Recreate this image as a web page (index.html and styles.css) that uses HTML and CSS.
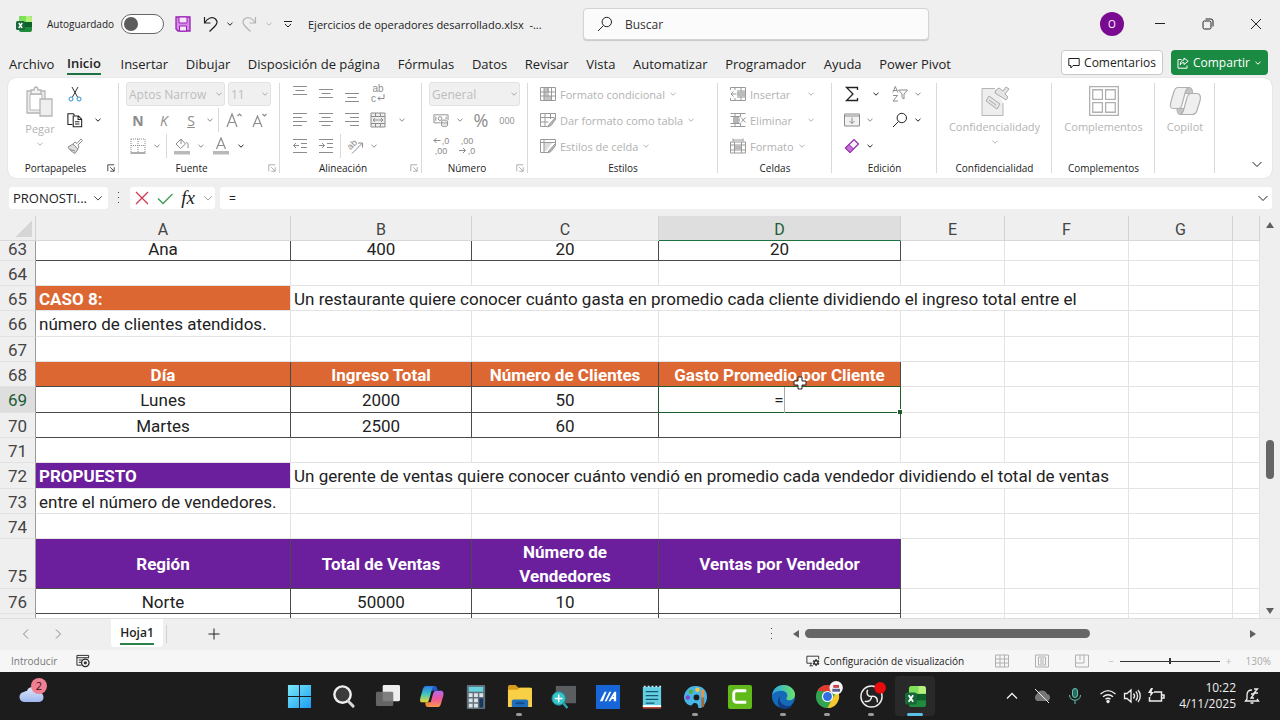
FILE: index.html
```html
<!DOCTYPE html>
<html lang="es">
<head>
<meta charset="utf-8">
<title>Ejercicios de operadores desarrollado.xlsx</title>
<link rel="stylesheet" href="styles.css">
</head>
<body>
<svg class="defs" aria-hidden="true">
  <defs>
    <linearGradient id="gWin" x1="0" y1="0" x2="1" y2="1"><stop offset="0" stop-color="#7be9fb"/><stop offset="1" stop-color="#1b9df0"/></linearGradient>
    <linearGradient id="gCopA" x1="0" y1="0" x2="0" y2="1"><stop offset="0" stop-color="#2a7be8"/><stop offset=".5" stop-color="#3fc6c0"/><stop offset="1" stop-color="#f3d62e"/></linearGradient>
    <linearGradient id="gCopB" x1="0" y1="0" x2="0" y2="1"><stop offset="0" stop-color="#b16bf0"/><stop offset=".5" stop-color="#f0569a"/><stop offset="1" stop-color="#fb9a4e"/></linearGradient>
    <linearGradient id="gEdge" x1="0" y1="0" x2="1" y2="0"><stop offset="0" stop-color="#2aa6e6"/><stop offset="1" stop-color="#6be36a"/></linearGradient>
    <linearGradient id="gCloud" x1="0" y1="0" x2="0" y2="1"><stop offset="0" stop-color="#dfe8fb"/><stop offset="1" stop-color="#9fb7ee"/></linearGradient>
  </defs>
  <symbol id="caret" viewBox="0 0 8 8"><path d="M1.500 2.800 4 5.200 6.500 2.800"/></symbol>
  <symbol id="chev" viewBox="0 0 12 12"><path d="M1.500 4 6 8.500 10.500 4"/></symbol>
  <symbol id="launch" viewBox="0 0 10 10"><path d="M1 9V1h8M9 4v5H4M4 4l4.500 4.500"/></symbol>
  <symbol id="excel" viewBox="0 0 16 16"><path fill="#1f8b3d" stroke="none" d="M3 2a2 2 0 0 1 2-2h9a2 2 0 0 1 2 2v12a2 2 0 0 1-2 2H5a2 2 0 0 1-2-2z"/><path fill="#7fe05a" stroke="none" d="M5 0h5v6H3V2a2 2 0 0 1 2-2z"/><path fill="#b6f07c" stroke="none" d="M10 0h4a2 2 0 0 1 2 2v4h-6z"/><path fill="#0f5f2a" stroke="none" d="M8 6h8v5H8z"/><rect x="0" y="5" width="9" height="9" rx="1.500" fill="#17693a" stroke="none"/><path stroke="#fff" stroke-width="1.400" d="m2.800 7 3.400 5M6.200 7l-3.400 5"/></symbol>
  <symbol id="save" viewBox="0 0 16 16"><path fill="#d58ee8" stroke="#9a1fb4" stroke-width="1.300" d="M1 1h14v14H3l-2-2z"/><path fill="#f7e6fa" stroke="#9a1fb4" d="M4 1h8v6H4zM4.500 10h7v5h-7z"/></symbol>
  <symbol id="undo" viewBox="0 0 16 16"><path stroke-width="1.200" d="M1.500 1v6h6M1.500 7c3-5 8-7 11-4 3.500 3.500 1 6-6 12.500"/></symbol>
  <symbol id="redo" viewBox="0 0 16 16"><path stroke-width="1.200" d="M14.500 1v6h-6M14.500 7c-3-5-8-7-11-4-3.500 3.500-1 6 6 12.500"/></symbol>
  <symbol id="qat" viewBox="0 0 10 10"><path d="M1 2.500h8M2 5l3 3 3-3"/></symbol>
  <symbol id="mag" viewBox="0 0 16 16"><circle cx="9.800" cy="6" r="4.700"/><path d="M6.500 9.500 1 15"/></symbol>
  <symbol id="comment" viewBox="0 0 12 12"><path d="M.8 1.500h10.400v7H5L2.800 11V8.500h-2z"/></symbol>
  <symbol id="share" viewBox="0 0 12 12"><path d="M4.500 2.500H1v8.700h9V8.500M7 1l4.200 3.200L7 7.500V5.600C5 5.600 4 6.500 3.200 8 3.300 5 4.500 3.200 7 3z"/></symbol>
  <symbol id="paste" viewBox="0 0 30 32"><path fill="#ececec" stroke="#b5b5b5" stroke-width="1.300" d="M2 5h18v22H2z"/><path fill="#fff" stroke="#b5b5b5" d="M5 8h12v16H5z"/><path fill="#f4f4f4" stroke="#b5b5b5" stroke-width="1.300" d="M6 4h3c0-4 4-4 4 0h3v4H6z"/><path fill="#efefef" stroke="#b5b5b5" stroke-width="1.300" d="M15 13h12v17H15z"/></symbol>
  <symbol id="cut" viewBox="0 0 16 16"><path stroke="#333" d="m5 1 5.500 10M11 1 5.500 11"/><circle cx="4" cy="13" r="2" stroke="#2a8fd0"/><circle cx="12" cy="13" r="2" stroke="#2a8fd0"/></symbol>
  <symbol id="copy" viewBox="0 0 18 16"><path stroke-width="1.200" d="M6 13H1V1h6l1.500 1.500M7 3.500h6l3.500 3.500v8.500H7zM12.500 3.500V7.500h4M9 10h5M9 12.500h5"/></symbol>
  <symbol id="brush" viewBox="0 0 16 16"><path fill="#ddd" d="m1 9 5-3 5 5-3 4.500C5 14 2.500 12 1 9z"/><path d="M3 11.500 8 13M6 6l2-2 2 1.500L14 1l1.500 1.500L11 7l1 2-1.500 2"/></symbol>
  <symbol id="border" viewBox="0 0 16 16"><path stroke-dasharray="1 1" d="M1 1h14v13M1 1v13M8 1v13M1 7.500h14"/><path stroke-width="1.400" d="M.5 15h15"/></symbol>
  <symbol id="fill" viewBox="0 0 18 18"><path d="m3 7 5-5 4.500 5L7.500 11.500zM8 2v5M13 6c1.500-1 2.500 0 2 5"/><path fill="#b9b9b9" stroke="none" d="M1 14h16v3.500H1z"/></symbol>
  <symbol id="fcolor" viewBox="0 0 18 18"><path stroke-width="1.200" d="m4.500 12 4.500-11 4.500 11M6 8.500h6"/><path fill="#b9b9b9" stroke="none" d="M1 14h16v3.500H1z"/></symbol>
  <symbol id="bigA" viewBox="0 0 16 16"><path stroke-width="1.200" d="M1 15 6 2l5 13M3 10.500h6M11.500 4 13.500 2l2 2"/></symbol>
  <symbol id="smallA" viewBox="0 0 16 16"><path stroke-width="1.200" d="M1 15 5.500 4 10 15M2.500 11.500h6M10.500 2l2 2 2-2"/></symbol>
  <symbol id="at" viewBox="0 0 16 16"><path d="M1 .5h14M3.500 4.500h9M1 8.500h14"/></symbol>
  <symbol id="am" viewBox="0 0 16 16"><path d="M1 3.500h14M3.500 7.500h9M1 11.500h14"/></symbol>
  <symbol id="ab" viewBox="0 0 16 16"><path d="M1 7.500h14M3.500 11.500h9M1 15.500h14"/></symbol>
  <symbol id="al" viewBox="0 0 16 16"><path d="M1 1.500h14M1 5.500h9M1 9.500h14M1 13.500h9"/></symbol>
  <symbol id="ac" viewBox="0 0 16 16"><path d="M1 1.500h14M3.500 5.500h9M1 9.500h14M3.500 13.500h9"/></symbol>
  <symbol id="ar" viewBox="0 0 16 16"><path d="M1 1.500h14M6 5.500h9M1 9.500h14M6 13.500h9"/></symbol>
  <symbol id="outd" viewBox="0 0 16 16"><path d="M1 1.500h14M9 5.500h6M9 9.500h6M1 14.500h14M1.500 7.500H7M4 5 1.500 7.500 4 10"/></symbol>
  <symbol id="ind" viewBox="0 0 16 16"><path d="M1 1.500h14M9 5.500h6M9 9.500h6M1 14.500h14M1 7.500h5.500M4 5l2.500 2.500L4 10"/></symbol>
  <symbol id="merge" viewBox="0 0 16 16"><path fill="#eee" d="M1 1h14v14H1z"/><path d="M1 4.500h14M1 11.500h14M5.500 1v3.500M10.500 1v3.500M5.500 11.500V15M10.500 11.500V15M3 8h10M5 6 3 8l2 2M11 6l2 2-2 2"/></symbol>
  <symbol id="money" viewBox="0 0 17 16"><path d="M8 11H1V2.500h15V8M3 4.500v4.500M14 4.500V7"/><circle cx="7.500" cy="6.500" r="2"/><path fill="#e8e8e8" d="M9 9.500c0-2 6.500-2 6.500 0v4c0 2-6.500 2-6.500 0zM9 10c0 1.500 6.500 1.500 6.500 0"/></symbol>
  <symbol id="cond" viewBox="0 0 16 16"><path fill="#fff" d="M.5 1.500h15v13H.5z"/><path fill="#c4c4c4" stroke="none" d="M4 2h5v4H4zM4 10h7v4H4zM4 6h3v4H4z"/><path d="M.5 6h15M.5 10h15M4 1.500v13M11.500 1.500v13M8 1.500V10"/></symbol>
  <symbol id="tabl" viewBox="0 0 16 16"><path d="M7 14.500H.5v-13h15V6M.5 5.500h14M.5 10h8M5 1.500v13M10.500 1.500V7"/><path fill="#bbb" d="M15.500 5.500 9.500 12l-2 3 3.500-1.500 4.500-6z"/></symbol>
  <symbol id="styl" viewBox="0 0 16 16"><path fill="#ddd" stroke="none" d="M4 5h8l-6 8H4z"/><path d="M7 14.500H.5v-13h15V6M.5 4.500h15M4 1.500v13"/><path fill="#bbb" d="M15.500 5.500 9.500 12l-2 3 3.500-1.500 4.500-6z"/></symbol>
  <symbol id="cins" viewBox="0 0 16 16"><path d="M.5 4V1.500h15v13H.5V12M7 5h8.500M7 11h8.500M11 1.500v13M5 1.500V4M5 12v2.500M6.500 8H1M3.500 5.500 1 8l2.500 2.500"/><path fill="#bbb" stroke="none" d="M7 5.500h8v5H7z"/></symbol>
  <symbol id="cdel" viewBox="0 0 16 16"><path d="M.5 1.500h15M.5 14.500h15M.5 4.500h10M.5 11.500h10M5 1.500v3M5 11.500v3M10.500 1.500v3M10.500 11.500v3M11 5.500l4.500 5M15.500 5.500l-4.500 5"/><path fill="#b5b5b5" stroke="none" d="M3 5h6l1 3-1 3H3z"/></symbol>
  <symbol id="cfmt" viewBox="0 0 16 16"><path d="M.5 4h15v11H.5zM3 .5v3M13 .5v3M3 2h10M.5 7h15M.5 12h15M4.500 4v11M11.500 4v11"/><path fill="#bbb" stroke="none" d="M5 7.500h6v4H5z"/></symbol>
  <symbol id="sum" viewBox="0 0 14 16"><path stroke-width="1.300" d="M12.500 4V1.500H1.500L8 8l-6.500 6.500h11V12"/></symbol>
  <symbol id="filld" viewBox="0 0 16 16"><path fill="#f2f2f2" d="M.5 2h15v12H.5zM.5 4h15"/><path d="M8 5.500v6M5.500 9 8 11.500 10.500 9"/></symbol>
  <symbol id="erase" viewBox="0 0 16 16"><path fill="#fbeffd" stroke="#8a2aa0" stroke-width="1.200" d="m1.500 10 8.500-8.500 4.500 4.500L6 14.500z"/><path fill="#c76fdc" stroke="#8a2aa0" d="M1.500 10 5 6.500 9.500 11 6 14.500z"/></symbol>
  <symbol id="sort" viewBox="0 0 16 16"><path d="m.8 6.500 2.500-6 2.500 6M1.500 4.500h3.600M1 9.500h4.500L1 15h5M6.500 4h9L12 8v5l-2-1.500V8z"/></symbol>
  <symbol id="conf" viewBox="0 0 28 30"><path fill="#eee" stroke="#b5b5b5" d="M14 2.500H1v27h21V17"/><path fill="#e4e4e4" stroke="#aaa" d="m8 10 11 8-3 5-11-8zM15 4l3-2 4 3 3-4 3 2-4 5 3 3-2 3-11-7z"/><path stroke="#aaa" d="m8 14 7 5"/></symbol>
  <symbol id="addin" viewBox="0 0 28 28"><path stroke="#b0b0b0" stroke-width="1.200" d="M.6.6h26.800v26.800H.6zM3.500 3.500h9v9h-9zM15.500 3.500h9v9h-9zM3.500 15.500h9v9h-9zM15.500 15.500h9v9h-9z"/></symbol>
  <symbol id="copg" viewBox="0 0 32 29"><path fill="#c4c4c4" stroke="#b0b0b0" d="M16 1h4c3 0 3 2 4 6h-9zM8 22h9l-2 6h-4c-2 0-3-2-3-6z"/><path fill="#efefef" stroke="#b0b0b0" stroke-width="1.200" d="M9 1h11c-2 0-3 2-4 6l-3 11c-1 3-1 4-4 4H4c-3 0-3-3-2-7L5 5c1-3 2-4 4-4zM23 28H11c2 0 3-2 4-6l3-11c1-3 2-4 4-4h6c3 0 4 3 3 7l-3 10c-1 3-2 4-5 4z"/></symbol>
  <symbol id="cfg" viewBox="0 0 16 14"><path d="M7 9.500H1v-8h13.500V5M4 12.500h4M5.500 9.500v3"/><path fill="#333" stroke="none" d="M10.500 5h2l.3 1.500 1.500-.6 1 1.700-1.200 1 1.200 1.200-1 1.700-1.500-.5-.3 1.500h-2l-.4-1.500-1.500.5-1-1.700L8.900 8.600l-1.200-1 1-1.700 1.500.6z"/><circle cx="11.500" cy="8.800" r="1.300" fill="#fff" stroke="none"/></symbol>
  <symbol id="macro" viewBox="0 0 15 14"><path d="M6 11.500H1V1h12.500v3M1 3.500h12.500M3 6h4M3 8.500h2.500"/><circle cx="10" cy="9" r="4" stroke-width="1.300"/><circle cx="10" cy="9" r="1.700" fill="#333" stroke="none"/></symbol>
  <symbol id="vgrid" viewBox="0 0 14 13"><path d="M.5.5h13v12H.5zM.5 4.500h13M.5 8.500h13M5 .5v12M9.500.5v12"/></symbol>
  <symbol id="vpage" viewBox="0 0 14 13"><path d="M.5.5h13v12H.5zM3.500 2.500h7v8h-7zM5 4.500h4M5 6.500h4M5 8.500h4"/></symbol>
  <symbol id="vbrk" viewBox="0 0 14 13"><path d="M.5.5h13v12H.5zM.5 8.500h8.500V.5M5 .5v5"/></symbol>
</svg>

<div class="app">
<header class="title">
  <svg class="i s16"><use href="#excel"/></svg>
  <label class="auto">Autoguardado <input type="checkbox" class="toggle"></label>
  <div class="quick">
    <button class="b w26" aria-label="Guardar"><svg class="i s16"><use href="#save"/></svg></button>
    <button class="b w30" aria-label="Deshacer"><svg class="i s16"><use href="#undo"/></svg></button>
    <button class="b w8" aria-label="Más deshacer"><svg class="i s8"><use href="#caret"/></svg></button>
    <button class="b w30 dim" aria-label="Rehacer"><svg class="i s16"><use href="#redo"/></svg></button>
    <button class="b w10 dim" aria-label="Más rehacer"><svg class="i s8"><use href="#caret"/></svg></button>
    <button class="b w28" aria-label="Personalizar"><svg class="i s10"><use href="#qat"/></svg></button>
  </div>
  <span class="doc">Ejercicios de operadores desarrollado.xlsx&nbsp; -...</span>
  <label class="search"><svg class="i s16"><use href="#mag"/></svg><input type="search" placeholder="Buscar" aria-label="Buscar"></label>
  <div class="win">
    <button class="avatar">O</button>
    <button class="b w48" aria-label="Minimizar"><svg class="i s12" viewBox="0 0 12 12"><path d="M1 5.500h10"/></svg></button>
    <button class="b w48" aria-label="Restaurar"><svg class="i s12" viewBox="0 0 12 12"><rect x="1" y="3" width="8" height="8" rx="1.500"/><path d="M3.500 1H9a2 2 0 0 1 2 2v5.500"/></svg></button>
    <button class="b w48" aria-label="Cerrar"><svg class="i s12" viewBox="0 0 12 12"><path d="m1 1 10 10M11 1 1 11"/></svg></button>
  </div>
</header>

<div class="tabs">
  <nav>
    <button>Archivo</button><button class="on">Inicio</button><button>Insertar</button><button>Dibujar</button><button>Disposición de página</button><button>Fórmulas</button><button>Datos</button><button>Revisar</button><button>Vista</button><button>Automatizar</button><button>Programador</button><button>Ayuda</button><button>Power Pivot</button>
  </nav>
  <div class="acts">
    <button class="cmt"><svg class="i s12"><use href="#comment"/></svg>Comentarios</button>
    <button class="shr"><svg class="i s12"><use href="#share"/></svg>Compartir<svg class="i s8"><use href="#caret"/></svg></button>
  </div>
</div>

<section class="ribbon">
  <div class="grp">
    <div class="clip">
      <button class="big dim"><svg class="i paste"><use href="#paste"/></svg><span>Pegar</span><svg class="i s8"><use href="#caret"/></svg></button>
      <div>
        <div class="row"><button class="b w22" aria-label="Cortar"><svg class="i s16"><use href="#cut"/></svg></button></div>
        <div class="row"><button class="b w22" aria-label="Copiar"><svg class="i s16"><use href="#copy"/></svg></button><button class="b w24" aria-label="Más copiar"><svg class="i s8"><use href="#caret"/></svg></button></div>
        <div class="row"><button class="b w22 mid" aria-label="Copiar formato"><svg class="i s16"><use href="#brush"/></svg></button></div>
      </div>
    </div>
    <footer class="more">Portapapeles<button class="b ln" aria-label="Opciones de portapapeles"><svg class="i s8"><use href="#launch"/></svg></button></footer>
  </div>
  <div class="grp mid">
    <div class="row g3"><label class="sel w99"><select disabled aria-label="Fuente"><option>Aptos Narrow</option></select><svg class="i s8"><use href="#caret"/></svg></label><label class="sel w43"><select disabled aria-label="Tamaño"><option>11</option></select><svg class="i s8"><use href="#caret"/></svg></label></div>
    <div class="row"><button class="b w24 t"><b>N</b></button><button class="b w28 t"><i>K</i></button><button class="b w26 t"><u>S</u></button><button class="b w12" aria-label="Más subrayado"><svg class="i s8"><use href="#caret"/></svg></button><span class="vr"></span><button class="b w26" aria-label="Aumentar"><svg class="i s16"><use href="#bigA"/></svg></button><button class="b w26" aria-label="Disminuir"><svg class="i s16"><use href="#smallA"/></svg></button></div>
    <div class="row"><button class="b w24" aria-label="Bordes"><svg class="i s16"><use href="#border"/></svg></button><button class="b w14" aria-label="Más bordes"><svg class="i s8"><use href="#caret"/></svg></button><span class="vr"></span><button class="b w26" aria-label="Relleno"><svg class="i s18"><use href="#fill"/></svg></button><button class="b w12" aria-label="Más relleno"><svg class="i s8"><use href="#caret"/></svg></button><button class="b w28" aria-label="Color de fuente"><svg class="i s18"><use href="#fcolor"/></svg></button><button class="b w12 dark" aria-label="Más color"><svg class="i s8"><use href="#caret"/></svg></button></div>
    <footer class="more">Fuente<button class="b ln" aria-label="Opciones de fuente"><svg class="i s8"><use href="#launch"/></svg></button></footer>
  </div>
  <div class="grp mid">
    <div class="row"><button class="b w26" aria-label="Arriba"><svg class="i s16"><use href="#at"/></svg></button><button class="b w26" aria-label="Medio"><svg class="i s16"><use href="#am"/></svg></button><button class="b w26" aria-label="Abajo"><svg class="i s16"><use href="#ab"/></svg></button><button class="b w26 duo wrap" aria-label="Ajustar texto"><span>ab</span><span>c<svg class="i s8" viewBox="0 0 8 8"><path d="M7 0v4.500H1M3 2.500l-2 2 2 2"/></svg></span></button></div>
    <div class="row"><button class="b w26" aria-label="Izquierda"><svg class="i s16"><use href="#al"/></svg></button><button class="b w26" aria-label="Centro"><svg class="i s16"><use href="#ac"/></svg></button><button class="b w26" aria-label="Derecha"><svg class="i s16"><use href="#ar"/></svg></button><button class="b w26" aria-label="Combinar"><svg class="i s16"><use href="#merge"/></svg></button><button class="b w22" aria-label="Más combinar"><svg class="i s8"><use href="#caret"/></svg></button></div>
    <div class="row"><button class="b w26" aria-label="Menos sangría"><svg class="i s16"><use href="#outd"/></svg></button><button class="b w26" aria-label="Más sangría"><svg class="i s16"><use href="#ind"/></svg></button><span class="vr tight"></span><button class="b w26" aria-label="Orientación"><svg class="i s16" viewBox="0 0 16 16"><path d="M5 15.500 15.500 5M11 5h4.500v4.500"/><text class="rot" x="1" y="10" transform="rotate(-45 5 8)">ab</text></svg></button><button class="b w12" aria-label="Más orientación"><svg class="i s8"><use href="#caret"/></svg></button></div>
    <footer class="more">Alineación<button class="b ln" aria-label="Opciones de alineación"><svg class="i s8"><use href="#launch"/></svg></button></footer>
  </div>
  <div class="grp mid">
    <div class="row"><label class="sel w91"><select disabled aria-label="Formato de número"><option>General</option></select><svg class="i s8"><use href="#caret"/></svg></label></div>
    <div class="row"><button class="b w24" aria-label="Moneda"><svg class="i s16"><use href="#money"/></svg></button><button class="b w14" aria-label="Más moneda"><svg class="i s8"><use href="#caret"/></svg></button><button class="b w28 pct">%</button><button class="b w24 tiny">000</button></div>
    <div class="row"><button class="b w24 duo" aria-label="Aumentar decimales"><span><svg class="i s8" viewBox="0 0 8 8"><path d="M7.500 4.500H1M3.500 2 1 4.500 3.500 7"/></svg>,0</span><span>,00</span></button><button class="b w28 duo" aria-label="Disminuir decimales"><span>,00</span><span><svg class="i s8" viewBox="0 0 8 8"><path d="M0 4.500h6.500M4 2l2.500 2.500L4 7"/></svg>,0</span></button></div>
    <footer class="more">Número<button class="b ln" aria-label="Opciones de número"><svg class="i s8"><use href="#launch"/></svg></button></footer>
  </div>
  <div class="grp dimt wide">
    <div class="row"><button class="b lab"><svg class="i s16"><use href="#cond"/></svg>Formato condicional<svg class="i s8"><use href="#caret"/></svg></button></div>
    <div class="row"><button class="b lab"><svg class="i s16"><use href="#tabl"/></svg>Dar formato como tabla<svg class="i s8"><use href="#caret"/></svg></button></div>
    <div class="row"><button class="b lab"><svg class="i s16"><use href="#styl"/></svg>Estilos de celda<svg class="i s8"><use href="#caret"/></svg></button></div>
    <footer>Estilos</footer>
  </div>
  <div class="grp dimt wide">
    <div class="row"><button class="b lab stretch"><svg class="i s16"><use href="#cins"/></svg>Insertar<svg class="i s8"><use href="#caret"/></svg></button></div>
    <div class="row"><button class="b lab stretch"><svg class="i s16"><use href="#cdel"/></svg>Eliminar<svg class="i s8"><use href="#caret"/></svg></button></div>
    <div class="row"><button class="b lab"><svg class="i s16"><use href="#cfmt"/></svg>Formato<svg class="i s8"><use href="#caret"/></svg></button></div>
    <footer>Celdas</footer>
  </div>
  <div class="grp">
    <div class="row"><button class="b w26" aria-label="Autosuma"><svg class="i s16"><use href="#sum"/></svg></button><button class="b w22" aria-label="Más autosuma"><svg class="i s8"><use href="#caret"/></svg></button><button class="b w26 mid" aria-label="Ordenar"><svg class="i s16"><use href="#sort"/></svg></button><button class="b w10 mid" aria-label="Más ordenar"><svg class="i s8"><use href="#caret"/></svg></button></div>
    <div class="row"><button class="b w26 mid" aria-label="Rellenar"><svg class="i s16"><use href="#filld"/></svg></button><button class="b w10 mid" aria-label="Más rellenar"><svg class="i s8"><use href="#caret"/></svg></button><button class="b w26 gapl" aria-label="Buscar y seleccionar"><svg class="i s16"><use href="#mag"/></svg></button><button class="b w10" aria-label="Más buscar"><svg class="i s8"><use href="#caret"/></svg></button></div>
    <div class="row"><button class="b w26" aria-label="Borrar"><svg class="i s16"><use href="#erase"/></svg></button><button class="b w10" aria-label="Más borrar"><svg class="i s8"><use href="#caret"/></svg></button></div>
    <footer>Edición</footer>
  </div>
  <div class="grp"><button class="big dim"><svg class="i s30"><use href="#conf"/></svg><span>Confidencialidady</span><svg class="i s8"><use href="#caret"/></svg></button><footer>Confidencialidad</footer></div>
  <div class="grp"><button class="big dim"><svg class="i s30"><use href="#addin"/></svg><span>Complementos</span></button><footer>Complementos</footer></div>
  <div class="grp"><button class="big dim"><svg class="i s32"><use href="#copg"/></svg><span>Copilot</span></button></div>
  <button class="b fold" aria-label="Contraer cinta"><svg class="i s12"><use href="#chev"/></svg></button>
</section>

<section class="fbar">
  <button class="name">PRONOSTI...<svg class="i s10"><use href="#chev"/></svg></button>
  <span class="dots"></span>
  <div class="fx">
    <button class="b" aria-label="Cancelar"><svg class="i s14" viewBox="0 0 14 14"><path stroke="#cf3a52" stroke-width="1.300" d="m1 1 12 12M13 1 1 13"/></svg></button>
    <button class="b" aria-label="Aceptar"><svg class="i s16" viewBox="0 0 16 16"><path stroke="#3f9a54" stroke-width="1.300" d="m1 8.500 5 5L15.500 4"/></svg></button>
    <button class="b f">fx</button>
    <svg class="i s10 lt"><use href="#chev"/></svg>
  </div>
  <label class="formula"><input type="text" value="=" aria-label="Barra de fórmulas"><svg class="i s12"><use href="#chev"/></svg></label>
</section>

<main class="work">
  <div class="sheet">
    <table>
      <colgroup><col class="cr"><col class="ca"><col class="cb"><col class="cc"><col class="cd"><col class="ce"><col class="cf"><col class="cg"><col></colgroup>
      <thead><tr><th class="corner"></th><th>A</th><th>B</th><th>C</th><th class="act">D</th><th>E</th><th>F</th><th>G</th><th></th></tr></thead>
      <tbody>
        <tr class="cut"><th>63</th><td class="k">Ana</td><td class="k">400</td><td class="k">20</td><td class="k">20</td><td></td><td></td><td></td><td></td></tr>
        <tr><th>64</th><td></td><td></td><td></td><td></td><td></td><td></td><td></td><td></td></tr>
        <tr><th>65</th><td class="o l">CASO 8:</td><td class="l" colspan="5">Un restaurante quiere conocer cuánto gasta en promedio cada cliente dividiendo el ingreso total entre el</td><td></td><td></td></tr>
        <tr><th>66</th><td class="l">número de clientes atendidos.</td><td></td><td></td><td></td><td></td><td></td><td></td><td></td></tr>
        <tr><th>67</th><td></td><td></td><td></td><td></td><td></td><td></td><td></td><td></td></tr>
        <tr><th>68</th><td class="o k">Día</td><td class="o k">Ingreso Total</td><td class="o k">Número de Clientes</td><td class="o k host">Gasto Promedio por Cliente<svg class="cursor" viewBox="0 0 14 14"><path fill="#fff" stroke="#222" d="M5 1h4v4h4v4H9v4H5V9H1V5h4z"/></svg></td><td></td><td></td><td></td><td></td></tr>
        <tr><th class="act">69</th><td class="k">Lunes</td><td class="k">2000</td><td class="k">50</td><td class="k edit"><span>=</span></td><td></td><td></td><td></td><td></td></tr>
        <tr><th>70</th><td class="k">Martes</td><td class="k">2500</td><td class="k">60</td><td class="k"></td><td></td><td></td><td></td><td></td></tr>
        <tr><th>71</th><td></td><td></td><td></td><td></td><td></td><td></td><td></td><td></td></tr>
        <tr><th>72</th><td class="p l">PROPUESTO</td><td class="l" colspan="5">Un gerente de ventas quiere conocer cuánto vendió en promedio cada vendedor dividiendo el total de ventas</td><td></td><td></td></tr>
        <tr><th>73</th><td class="l">entre el número de vendedores.</td><td></td><td></td><td></td><td></td><td></td><td></td><td></td></tr>
        <tr><th>74</th><td></td><td></td><td></td><td></td><td></td><td></td><td></td><td></td></tr>
        <tr class="tall"><th>75</th><td class="p k">Región</td><td class="p k">Total de Ventas</td><td class="p k">Número de<br>Vendedores</td><td class="p k">Ventas por Vendedor</td><td></td><td></td><td></td><td></td></tr>
        <tr><th>76</th><td class="k">Norte</td><td class="k">50000</td><td class="k">10</td><td class="k"></td><td></td><td></td><td></td><td></td></tr>
        <tr><th></th><td class="k"></td><td class="k"></td><td class="k"></td><td class="k"></td><td></td><td></td><td></td><td></td></tr>
      </tbody>
    </table>
  </div>
  <div class="vscroll"><svg class="tri" viewBox="0 0 10 8"><path d="M5 1 9 7H1z"/></svg><span class="before"></span><span class="vthumb"></span><span class="after"></span><svg class="tri" viewBox="0 0 10 8"><path d="M5 7 9 1H1z"/></svg></div>
</main>

<div class="sheets">
  <button class="b nav" aria-label="Anterior"><svg class="i s12 lt" viewBox="0 0 12 12"><path d="M8 1.500 3.500 6 8 10.500"/></svg></button>
  <button class="b nav" aria-label="Siguiente"><svg class="i s12 lt" viewBox="0 0 12 12"><path d="M4 1.500 8.500 6 4 10.500"/></svg></button>
  <button class="stab"><span>Hoja1</span></button>
  <span class="rule"></span>
  <button class="b plus" aria-label="Hoja nueva"><svg class="i s12" viewBox="0 0 12 12"><path d="M6 .5v11M.5 6h11"/></svg></button>
  <span class="dots"></span>
  <div class="hscroll"><svg class="tri" viewBox="0 0 8 10"><path d="M1 5 7 1v8z"/></svg><span class="hthumb"></span><span class="hrest"></span><svg class="tri" viewBox="0 0 8 10"><path d="M7 5 1 1v8z"/></svg></div>
</div>

<div class="status">
  <span class="mode">Introducir</span>
  <svg class="i s14"><use href="#macro"/></svg>
  <button class="b cfg"><svg class="i s14"><use href="#cfg"/></svg>Configuración de visualización</button>
  <div class="views"><svg class="i s14"><use href="#vgrid"/></svg><svg class="i s14"><use href="#vpage"/></svg><svg class="i s14"><use href="#vbrk"/></svg></div>
  <label class="zoom"><span>−</span><input type="range" min="10" max="250" value="130" aria-label="Zoom"><span>+</span></label>
  <span class="pc">130%</span>
</div>

<footer class="task">
  <button class="b weather" aria-label="Tiempo"><svg viewBox="0 0 28 26"><path fill="url(#gCloud)" d="M6 24a5 5 0 0 1-1-10c1-1 2-1 3-1 1-5 10-6 12 1 6 1 6 10 0 10z"/><circle cx="20" cy="8" r="8" fill="#ef7f91"/><text class="badge" x="20" y="12">2</text></svg></button>
  <div class="apps">
    <button class="app1" aria-label="Inicio"><svg viewBox="0 0 26 26"><path fill="url(#gWin)" d="M1 1h11.500v11.500H1zM13.500 1H25v11.500H13.500zM1 13.500h11.500V25H1zM13.500 13.500H25V25H13.500z"/></svg></button>
    <button class="app1" aria-label="Buscar"><svg viewBox="0 0 26 26"><circle cx="12" cy="11" r="8.500" fill="#3b3b3b" stroke="#f0f0f0" stroke-width="2.500"/><path stroke="#d8d8d8" stroke-width="3" stroke-linecap="round" d="m18 18 5 5"/></svg></button>
    <button class="app1" aria-label="Vista de tareas"><svg viewBox="0 0 26 26"><rect x="8" y="1" width="18" height="17" rx="1.500" fill="#eee"/><rect x="1" y="8" width="18" height="15" rx="1.500" fill="#6f6f6f" opacity=".88"/></svg></button>
    <button class="app1" aria-label="Copilot"><svg viewBox="0 0 32 29"><path fill="#2458c8" d="M16 1h4c3 0 3 2 4 6h-9z"/><path fill="#f58a3c" d="M8 22h9l-2 6h-4c-2 0-3-2-3-6z"/><path fill="url(#gCopA)" d="M9 1h11c-2 0-3 2-4 6l-3 11c-1 3-1 4-4 4H4c-3 0-3-3-2-7L5 5c1-3 2-4 4-4z"/><path fill="url(#gCopB)" d="M23 28H11c2 0 3-2 4-6l3-11c1-3 2-4 4-4h6c3 0 4 3 3 7l-3 10c-1 3-2 4-5 4z"/></svg></button>
    <button class="app1" aria-label="Calculadora"><svg viewBox="0 0 26 26"><rect x="4" y="1" width="19" height="25" rx="1" fill="#60717c"/><path fill="#66d3dc" d="M6 3h15v5H6z"/><path fill="#dce4e8" d="M6 9.500h4v4H6zM11.500 9.500h4v4h-4zM17 9.500h4v4h-4zM6 15h4v4H6zM11.500 15h4v4h-4zM6 20.500h4v4H6zM11.500 20.500h4v4h-4z"/><path fill="#173a5c" d="M17 15h4v9.500h-4z"/></svg></button>
    <button class="app1 run" aria-label="Explorador"><svg viewBox="0 0 26 26"><path fill="#d79b1d" d="M1 3a2 2 0 0 1 2-2h6l3 3h12v8H1z"/><path fill="#f8cf45" d="M1 6h10l2-2h12a1 1 0 0 1 1 1v19H1z"/><path fill="#1d6fbc" d="M5 24v-6a2 2 0 0 1 2-2h13a2 2 0 0 1 2 2v6z"/><path fill="#124b87" d="M9 19h9v2H9z"/></svg></button>
    <button class="app1" aria-label="Lupa"><svg viewBox="0 0 26 26"><path fill="#5b5e61" d="M5 2h21v18H5z"/><circle cx="8" cy="15" r="7" fill="#38c3c9" stroke="#1b8c94"/><path stroke="#fff" stroke-width="1.500" d="M8 11v8M4 15h8"/><path stroke="#2ba9b0" stroke-width="2.500" d="m13 20 4 5"/></svg></button>
    <button class="app1" aria-label="MyASUS"><svg viewBox="0 0 26 26"><path fill="#1666d8" d="M1 1h25v25H1z"/><path fill="#fff" d="m5 18 5-10h2L8 18zM10 18l5-10h2l-5 10zM14 18l6-10h2v10h-2.500v-2.500h-2L16 18zM18.500 13.500h1V12z"/></svg></button>
    <button class="app1" aria-label="Bloc de notas"><svg viewBox="0 0 26 26"><path fill="#62cfe3" d="M4 3h19v21H4z"/><path fill="#fff" d="M4 22h19v2H4z"/><path fill="#c84b3c" d="M4 24h19v1.500H4z"/><path stroke="#19576d" stroke-width="1.300" d="M7 8h13M7 12h13M7 16h13M7 20h9"/><path stroke="#cdeff6" stroke-width="1.500" stroke-dasharray="2 2" d="M5 2.500h18"/></svg></button>
    <button class="app1 run" aria-label="Paint"><svg viewBox="0 0 26 26"><path fill="#47b5e8" d="M13 2c8 0 12 5 12 11s-3 9-6 12h-3c0-4-2-6-5-5-2 1-1 3-4 2C3 21 1 17 1 13 2 7 6 2 13 2z"/><circle cx="8" cy="8" r="2.300" fill="#4fae48"/><circle cx="15" cy="6" r="2.300" fill="#f2c53a"/><circle cx="5" cy="14" r="2.300" fill="#8446c4"/><circle cx="14" cy="14" r="3" fill="#1c1c1c"/><path fill="#e8914b" d="M19 6h3v8h-3z"/><path fill="#a3683a" d="M19 14h3v10h-3z"/></svg></button>
    <button class="app1" aria-label="Camtasia"><svg viewBox="0 0 26 26"><rect x="1" y="1" width="25" height="25" rx="2" fill="#61b91c"/><path stroke="#fff" stroke-width="3" d="M20 7H10a3 3 0 0 0-3 3v6a3 3 0 0 0 3 3h10"/></svg></button>
    <button class="app1 run" aria-label="Edge"><svg viewBox="0 0 26 26"><circle cx="13" cy="13" r="12" fill="#1668b8"/><path fill="url(#gEdge)" d="M1 12C2 5 7 1 13 1c7 0 12 5 12 10 0 4-3 6-6 6-2 0-3-1-3-2s1-1 1-3c0-3-3-5-7-5-5 0-8 3-9 5z"/><path fill="#0d3e87" d="M10 12c-3 5 1 11 8 11 2 0 4-1 5-2-2 4-6 5-10 5-6-1-8-9-3-14z"/></svg></button>
    <button class="app1 run" aria-label="Chrome"><svg viewBox="1 1 26 26"><circle cx="14" cy="14" r="12" fill="#32a350"/><path fill="#e33b2e" d="M3.600 8A12 12 0 0 1 24.400 8L14 9z"/><path fill="#f8c72c" d="M24.400 8A12 12 0 0 1 14 26l4.500-9z"/><circle cx="14" cy="14" r="5.800" fill="#fff"/><circle cx="14" cy="14" r="4.600" fill="#2f6fe0"/><circle cx="23" cy="5" r="7" fill="#f4f4f4"/><path fill="#c84246" d="M20 2h6v3h-6z"/><path fill="#5a5c94" d="M19 6h8v3h-8z"/></svg></button>
    <button class="app1 run" aria-label="OBS"><svg viewBox="1 1 26 26"><circle cx="14" cy="14" r="11" fill="#222" stroke="#eee" stroke-width="1.500"/><path stroke="#eee" stroke-width="1.600" d="M14 14c-4 0-6-3-4-7M14 14c4-1 7 2 6 6M14 14c0 4-3 6-7 5"/><circle cx="23" cy="5" r="6" fill="#e90c0c"/></svg></button>
    <button class="app1 active" aria-label="Excel"><svg viewBox="0 0 16 16"><use href="#excel"/></svg></button>
  </div>
  <div class="tray">
    <svg class="i s12" viewBox="0 0 12 12"><path stroke-width="1.400" d="M1 8.500 6 3.500l5 5"/></svg>
    <svg class="i s18" viewBox="0 0 18 18"><path fill="#777" stroke="none" d="M4 14a4 4 0 0 1 0-7c2-5 9-4 10 0 4 0 4 7 0 7z"/><path d="m2 2 14 14"/></svg>
    <svg class="i s18 mic" viewBox="0 0 18 18"><rect x="6.500" y="1.500" width="5" height="9" rx="2.500" fill="#2d6a62"/><path d="M3.500 8c0 7 11 7 11 0M9 13.500V17"/></svg>
    <div class="net">
      <svg class="i s18" viewBox="0 0 18 18"><path stroke-width="1.400" d="M1.500 7c5-4.500 10-4.500 15 0M4 9.800c3.500-3 6.500-3 10 0M6.500 12.300c1.800-1.500 3.200-1.500 5 0"/><circle cx="9" cy="14.500" r="1.300" fill="#eee"/></svg>
      <svg class="i s18" viewBox="0 0 18 18"><path stroke-width="1.300" d="M1.500 6.500H4l4-3.500v12l-4-3.500H1.500zM10.500 6.500c1.300 1.500 1.300 3.500 0 5M12.800 4.500c2.300 2.500 2.300 6.500 0 9M15 3c3 3.500 3 8.500 0 12"/></svg>
      <svg class="i s18" viewBox="0 0 18 18"><path stroke-width="1.500" d="M7 5h7.500v9h-12v-4M14.500 8H17v3h-2.500"/><path fill="#eee" stroke="none" d="M4 1 1 6h2.500L3 10l4-5H4.500L6 1z"/></svg>
    </div>
    <div class="clock"><span>10:22</span><span>4/11/2025</span></div>
    <svg class="i s16" viewBox="0 0 16 16"><path stroke-width="1.300" d="M8 2C4 2 3 5 3 7v4l-1.500 2h13L13 11M6.500 15h3M10 1h3.500L10 5h4M7 6h3L7 10h3"/></svg>
  </div>
</footer>
</div>
</body>
</html>
```
FILE: styles.css
```css
* { box-sizing: border-box; }
body { margin: 0; font-family: "Open Sans", "Noto Sans", sans-serif; font-size: 12px; color: #222; background: #efefef; }
button, input, select { font: inherit; color: inherit; }
button { border: 0; background: none; padding: 0; }
.defs { position: absolute; width: 0; height: 0; }
.app { display: flex; flex-direction: column; height: 100vh; overflow: hidden; }

.i { fill: none; stroke: currentColor; stroke-width: 1; flex: none; display: block; overflow: visible; }
.s8 { width: 8px; height: 8px; }
.s10 { width: 10px; height: 10px; }
.s12 { width: 12px; height: 12px; }
.s14 { width: 14px; height: 14px; }
.s16 { width: 16px; height: 16px; }
.s18 { width: 18px; height: 18px; }
.s30 { width: 30px; height: 30px; }
.s32 { width: 32px; height: 30px; }
.b { display: flex; align-items: center; justify-content: center; flex: none; }
.w8 { width: 8px; }
.w10 { width: 10px; }
.w12 { width: 12px; }
.w14 { width: 14px; }
.w22 { width: 22px; }
.w24 { width: 24px; }
.w26 { width: 26px; }
.w28 { width: 28px; }
.w30 { width: 30px; }
.w48 { width: 48px; }
.dim { color: #b4b4b4; }
.mid { color: #8c8c8c; }
.dark { color: #222; }
.lt { color: #888; }

.title { display: flex; align-items: center; height: 48px; padding-left: 16px; flex: none; }
.auto { display: flex; align-items: center; gap: 6px; width: 117px; margin-left: 15px; font-size: 10px; justify-content: space-between; }
.toggle { appearance: none; width: 43px; height: 20px; margin: 0; border: 1px solid #666; border-radius: 10px; background: #fff; padding: 2px; }
.toggle::before { content: ""; display: block; width: 14px; height: 14px; border-radius: 50%; background: #5c5c5c; }
.quick { display: flex; margin-left: 6px; }
.doc { margin-left: 6px; width: 275px; font-size: 11px; white-space: nowrap; }
.search { display: flex; align-items: center; gap: 12px; flex: 0 1 346px; height: 32px; padding: 0 13px; border: 1px solid #d4d4d4; border-radius: 4px; background: #fbfbfb; box-shadow: 0 1px 1px #c8c8c8; }
.search input { flex: 1; min-width: 0; border: 0; padding: 0; background: none; outline: 0; }
.search input::placeholder { color: #333; opacity: 1; }
.win { display: flex; align-items: center; margin-left: auto; }
.avatar { width: 24px; height: 24px; margin-right: 12px; border-radius: 50%; background: #7a0a92; color: #fff; font-size: 10px; }

.tabs { display: flex; justify-content: space-between; height: 30px; padding: 0 12px 0 9px; flex: none; }
.tabs nav { display: flex; justify-content: space-between; flex: 0 1 942px; }
.tabs nav button { height: 30px; padding-top: 2px; font-size: 13px; white-space: nowrap; }
.tabs nav .on { margin: 0 2px 0 -5px; height: 27px; padding-top: 5px; border-bottom: 2px solid #1d7042; font-weight: 600; }
.acts { display: flex; gap: 8px; }
.acts button { display: flex; align-items: center; justify-content: center; gap: 4px; height: 25px; margin-top: 2px; border-radius: 4px; }
.cmt { width: 102px; border: 1px solid #c9c9c9; background: #fff; }
.shr { width: 97px; background: #1b8a42; color: #fff; }

.ribbon { display: grid; grid-template-columns: 111px 161px 142px 106px 190px 114px 105px 115px 103px 60px 1fr; height: 100px; margin: 0 8px; border-radius: 8px; background: #fff; box-shadow: 0 0 1px #bbb; flex: none; }
.grp { display: grid; grid-template-columns: 100%; grid-template-rows: 26px 26px 26px 18px; padding: 3px 0 0 7px; background: linear-gradient(#d9d9d9, #d9d9d9) right 5px / 1px 90px no-repeat; }
.grp footer { grid-row: 4; display: flex; justify-content: center; align-items: center; margin-left: -7px; color: #222; font-size: 10px; position: relative; }
.grp .more { padding-right: 16px; }
.ln { position: absolute; right: 4px; bottom: 5px; }
.grp.mid .ln { color: #999; }
.row { display: flex; align-items: center; height: 26px; }
.row .b { height: 26px; }
.g3 { gap: 3px; }
.clip { grid-row: 1 / 4; display: flex; }
.big { grid-row: 1 / 4; display: flex; flex-direction: column; align-items: center; gap: 3px; padding-top: 5px; margin-left: -7px; font-size: 11px; white-space: nowrap; }
.clip .big { width: 50px; margin: 0 -1px 0 0; }
.big span { line-height: 16px; }
.paste { width: 30px; height: 32px; }
.sel { position: relative; display: block; height: 24px; }
.sel select { appearance: none; width: 100%; height: 24px; border: 1px solid #e2e2e2; border-radius: 3px; background: #f0f0f0; color: #bdbdbd; padding: 0 2px; opacity: 1; }
.sel .i { position: absolute; right: 2px; top: 8px; color: #a8a8a8; }
.w99 { width: 99px; }
.w43 { width: 43px; }
.w91 { width: 91px; }
.t { font-size: 14px; }
.pct { font-size: 18px; }
.tiny { font-size: 9px; }
.duo { flex-direction: column; font-family: "Liberation Sans", sans-serif; font-size: 9px; line-height: 10px; }
.duo span { display: flex; gap: 1px; }
.wrap { font-size: 10px; }
.rot { font-family: "Liberation Sans", sans-serif; font-size: 9px; fill: #888; stroke: none; }
.vr { width: 1px; height: 24px; margin: 0 2px; background: #d9d9d9; }
.tight { margin: 0 1px; }
.dimt .b { color: #b2b2b2; }
.dimt .b .i:first-child { color: #999; }
.wide { padding-left: 12px; }
.wide footer { margin-left: -12px; }
.lab { gap: 4px; font-size: 11px; }
.stretch { width: 85px; justify-content: flex-start; }
.stretch .i:last-child { margin-left: auto; }
.gapl { margin-left: 12px; }
.fold { justify-self: end; align-self: end; margin: 0 9px 8px 0; }

.fbar { display: flex; height: 38px; padding: 9px 8px 0 9px; flex: none; }
.name { display: flex; align-items: center; justify-content: space-between; width: 99px; height: 22px; padding: 0 5px 0 4px; border-radius: 3px; background: #fff; font-size: 13px; }
.dots { width: 3px; height: 15px; margin: 3px 9px 0; background: radial-gradient(circle, #444 1px, transparent 1px) 0 0 / 3px 5px; }
.fx { display: flex; align-items: center; justify-content: space-between; width: 85px; height: 22px; margin-left: 1px; padding: 0 2px 0 5px; border-radius: 3px; background: #fff; }
.f { font-family: "Liberation Serif", serif; font-style: italic; font-size: 19px; }
.formula { display: flex; align-items: center; flex: 1; height: 22px; margin-left: 5px; padding: 0 3px 0 9px; border-radius: 3px; background: #fff; }
.formula input { flex: 1; border: 0; padding: 0; outline: 0; background: none; }

.work { display: flex; flex: 1; min-height: 0; }
.sheet { flex: 1; min-width: 0; overflow: hidden; font-family: Roboto, sans-serif; font-size: 17px; }
table { width: 100%; table-layout: fixed; border-collapse: separate; border-spacing: 0; background: #fff; }
.cr { width: 36px; }
.ca { width: 255px; }
.cb { width: 181px; }
.cc { width: 187px; }
.cd { width: 242px; }
.ce { width: 104px; }
.cf { width: 124px; }
.cg { width: 104px; }
th { padding: 1px 0 0; background: #efefef; font-weight: 400; border-right: 1px solid #d2d2d2; border-bottom: 1px solid #d8d8d8; color: #444; line-height: 20px; }
thead th { height: 25px; font-size: 16px; padding-top: 3px; }
tbody th { border-right-color: #9a9a9a; border-bottom-color: #e2e2e2; }
.act { background: #dedede; color: #1d5c37; }
thead .act { border-bottom-color: #1d7042; }
.corner { background: linear-gradient(135deg, transparent 50%, #d6d6d6 50%) 16px 4px / 16px 17px no-repeat #efefef; }
td { padding: 1px 0 0; border-right: 1px solid #e3e3e3; border-bottom: 1px solid #e3e3e3; text-align: center; white-space: nowrap; line-height: 20px; }
tbody tr { height: 25px; }
tbody tr:nth-child(3n+1) { height: 26px; }
tbody tr.cut { height: 20px; }
tbody .cut > * { padding: 0 0 3px; line-height: 16px; }
tbody tr.tall { height: 50px; }
.tall td { line-height: 24px; }
.tall th { vertical-align: bottom; line-height: 24px; }
.l { text-align: left; padding-left: 3px; }
.k { border-color: #4a4a4a; }
.o { background: #dc6733; color: #fff; font-weight: 700; }
.p { background: #6b1f9c; color: #fff; font-weight: 700; }
.host { position: relative; }
.cursor { position: absolute; width: 14px; height: 14px; left: 134px; bottom: -4px; z-index: 2; }
.edit { border-color: #1d5c2c; box-shadow: -1px -1px 0 #1d5c2c; position: relative; }
.edit::after { content: ""; position: absolute; right: -2px; bottom: -2px; width: 4px; height: 4px; background: #1d5c2c; border: solid #fff; border-width: 1px 0 0 1px; }
.edit span { border-right: 1px solid #aaa; padding: 3px 0; }
.tri { width: 10px; height: 10px; fill: #606060; flex: none; }
.vscroll { width: 20px; display: flex; flex-direction: column; align-items: center; padding: 4px 0 2px; }
.before { flex: 211; }
.after { flex: 127; }
.vthumb { width: 8px; height: 39px; border-radius: 4px; background: #666; }

.sheets { display: flex; align-items: center; height: 32px; padding: 0 22px 2px 10px; border-top: 1px solid #ddd; flex: none; }
.nav { width: 32px; }
.stab { align-self: flex-start; width: 52px; height: 28px; margin-left: 37px; padding-bottom: 2px; border-radius: 0 0 4px 4px; background: #fff; font-weight: 600; }
.stab span { border-bottom: 2px solid #2c8048; padding-bottom: 2px; }
.rule { width: 1px; height: 18px; margin-left: 3px; background: #d0d0d0; }
.plus { width: 48px; margin-left: 23px; padding: 0; }
.sheets .dots { margin: 0 18px 0 auto; }
.hscroll { display: flex; align-items: center; gap: 4px; flex: 0 1 467px; }
.hthumb { flex: 287; height: 9px; border-radius: 5px; background: #666; }
.hrest { flex: 151; }

.status { display: flex; align-items: center; height: 22px; padding: 0 9px 0 11px; background: #f6f6f6; font-size: 10px; flex: none; }
.mode { width: 65px; color: #777; }
.cfg { gap: 3px; margin-left: auto; }
.views { display: flex; gap: 26px; margin-left: 31px; color: #b0b0b0; }
.zoom { display: flex; align-items: center; gap: 6px; margin-left: 19px; color: #bbb; }
.zoom input { appearance: none; width: 100px; height: 8px; margin: 0; background: linear-gradient(#333, #333) center / 100% 1px no-repeat; }
.zoom input::-webkit-slider-thumb { appearance: none; width: 2px; height: 6px; background: #333; }
.pc { margin-left: 14px; color: #aaa; }

.task { display: grid; grid-template-columns: 277px auto 1fr; align-items: center; height: 48px; background: #1c1c1c; color: #eee; flex: none; }
.weather { align-self: start; width: 28px; margin: 6px 0 0 19px; }
.weather svg { width: 28px; height: 26px; }
.badge { font-size: 11px; text-anchor: middle; fill: #3a1016; }
.apps { display: flex; }
.app1 { position: relative; display: flex; align-items: center; justify-content: center; width: 44px; height: 40px; border-radius: 4px; }
.app1 svg { width: 25px; height: 25px; fill: none; overflow: visible; }
.run::after, .active::after { content: ""; position: absolute; bottom: 0; width: 6px; height: 3px; border-radius: 2px; background: #9a9a9a; }
.active { width: 40px; margin-left: 2px; background: #292929; }
.active svg { width: 21px; height: 23px; }
.active::after { width: 16px; background: #5cc0e8; }
.tray { display: flex; align-items: center; justify-content: flex-end; gap: 15px; padding-right: 20px; }
.mic { color: #63c2ae; }
.net { display: flex; gap: 6px; margin-right: -1px; }
.clock { display: flex; flex-direction: column; align-items: flex-end; line-height: 16px; }
.tray > :last-child { margin-left: -7px; }
```
